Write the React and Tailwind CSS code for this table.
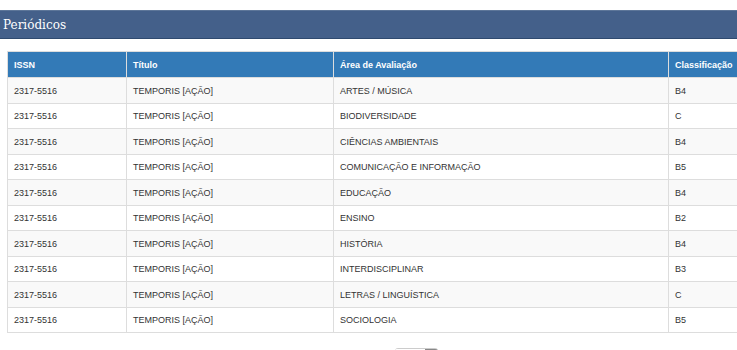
const rows = [
  ["ARTES / MÚSICA", "B4"],
  ["BIODIVERSIDADE", "C"],
  ["CIÊNCIAS AMBIENTAIS", "B4"],
  ["COMUNICAÇÃO E INFORMAÇÃO", "B5"],
  ["EDUCAÇÃO", "B4"],
  ["ENSINO", "B2"],
  ["HISTÓRIA", "B4"],
  ["INTERDISCIPLINAR", "B3"],
  ["LETRAS / LINGUÍSTICA", "C"],
  ["SOCIOLOGIA", "B5"],
];

const App = () => {
  return (
    <div className="h-[350px] w-[737px] overflow-hidden bg-white font-['Liberation_Sans',Arial,sans-serif]">
      <div className="mt-[10px] h-[29px] border-t border-t-[#5d7699] border-b border-b-[#2f4a6f] bg-[#44608a] pl-[3px] flex items-center">
        <h1 className="text-[12px] leading-none text-white font-['DejaVu_Serif',serif] pt-[1px]">
          Periódicos
        </h1>
      </div>

      <div className="pl-[7px] mt-[12px]">
        <table className="w-[760px] border-collapse table-fixed text-[9px] text-[#333]">
          <colgroup>
            <col className="w-[119px]" />
            <col className="w-[207px]" />
            <col className="w-[335px]" />
            <col className="w-[99px]" />
          </colgroup>
          <thead>
            <tr className="h-[26px] bg-[#337ab7] text-white font-bold">
              <th className="border border-[#ddd] px-[6px] pt-[3px] text-left">ISSN</th>
              <th className="border border-[#ddd] px-[6px] pt-[3px] text-left">Título</th>
              <th className="border border-[#ddd] px-[6px] pt-[3px] text-left">Área de Avaliação</th>
              <th className="border border-[#ddd] px-[6px] pt-[3px] text-left">Classificação</th>
            </tr>
          </thead>
          <tbody>
            {rows.map(([area, grade], i) => (
              <tr
                key={area}
                className={`h-[25.5px] ${i % 2 === 0 ? "bg-[#f9f9f9]" : "bg-white"}`}
              >
                <td className="border border-[#ddd] px-[6px] pt-[2px]">2317-5516</td>
                <td className="border border-[#ddd] px-[6px] pt-[2px]">TEMPORIS [AÇÃO]</td>
                <td className="border border-[#ddd] px-[6px] pt-[2px]">{area}</td>
                <td className="border border-[#ddd] px-[6px] pt-[2px]">{grade}</td>
              </tr>
            ))}
          </tbody>
        </table>
      </div>

      <div className="mt-[15px] ml-[395px] flex h-[20px] w-[43px] overflow-hidden rounded-t-[3px] border-t border-[#ccc]">
        <div className="flex-1 bg-white" />
        <div className="w-[13px] border-t border-[#888] bg-[#eee]" />
      </div>
    </div>
  );
};

export default App;
